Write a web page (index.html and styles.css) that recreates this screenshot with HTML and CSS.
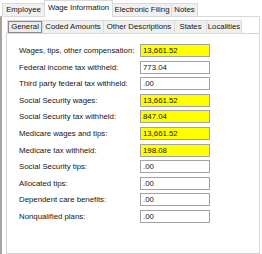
FILE: index.html
```html
<!DOCTYPE html>
<html>
<head>
<meta charset="utf-8">
<link rel="stylesheet" href="styles.css">
</head>
<body>
<div class="tabs">
  <div class="tab t-emp">Employee</div>
  <div class="tab active t-wage">Wage Information</div>
  <div class="tab t-efile">Electronic Filing</div>
  <div class="tab t-notes">Notes</div>
</div>
<div class="window">
  <div class="subtabs">
    <div class="subtab s-general active"><span class="focus">General</span></div>
    <div class="subtab s-coded">Coded Amounts</div>
    <div class="subtab s-other">Other Descriptions</div>
    <div class="subtab s-states">States</div>
    <div class="subtab s-local">Localities</div>
  </div>
  <div class="subpanel">
    <div class="row"><span class="label">Wages, tips, other compensation:</span><span class="box hl">13,661.52</span></div>
    <div class="row"><span class="label">Federal income tax withheld:</span><span class="box">773.04</span></div>
    <div class="row"><span class="label">Third party federal tax withheld:</span><span class="box">.00</span></div>
    <div class="row"><span class="label">Social Security wages:</span><span class="box hl">13,661.52</span></div>
    <div class="row"><span class="label">Social Security tax withheld:</span><span class="box hl">847.04</span></div>
    <div class="row"><span class="label">Medicare wages and tips:</span><span class="box hl">13,661.52</span></div>
    <div class="row"><span class="label">Medicare tax withheld:</span><span class="box hl">198.08</span></div>
    <div class="row"><span class="label">Social Security tips:</span><span class="box">.00</span></div>
    <div class="row"><span class="label">Allocated tips:</span><span class="box">.00</span></div>
    <div class="row"><span class="label">Dependent care benefits:</span><span class="box">.00</span></div>
    <div class="row"><span class="label">Nonqualified plans:</span><span class="box">.00</span></div>
  </div>
</div>
</body>
</html>
```
FILE: styles.css
```css
html, body {
  margin: 0;
  padding: 0;
  background: #ffffff;
  overflow: hidden;
}
body {
  width: 262px;
  height: 254px;
  font-family: "Liberation Sans", Arial, sans-serif;
  font-size: 7.8px;
  color: #141414;
}
.tabs {
  display: flex;
  align-items: flex-end;
  height: 17px;
  padding-left: 2px;
}
.tab {
  box-sizing: border-box;
  height: 14px;
  line-height: 12px;
  text-align: center;
  white-space: nowrap;
  background: #f0f0f0;
  border: 1px solid #d9d9d9;
  margin-right: -1px;
}
.tab.active {
  position: relative;
  z-index: 1;
  height: 17px;
  line-height: 14px;
  background: #ffffff;
  border-bottom: none;
}
.t-emp { width: 43px; }
.t-wage { width: 69px; }
.t-efile { width: 60px; }
.t-notes { width: 27px; }
.window {
  margin-top: -1px;
  margin-right: 2px;
  height: 234px;
  border-left: 2px solid #a9a39b;
  border-top: 1px solid #d9d9d9;
  border-right: 1px solid #d9d9d9;
  padding: 3px 0 0 4px;
}
.subtabs {
  display: flex;
  height: 14px;
  padding-left: 1px;
}
.subtab {
  box-sizing: border-box;
  height: 14px;
  line-height: 12px;
  text-align: center;
  white-space: nowrap;
  background: #f0f0f0;
  border: 1px solid #d9d9d9;
  margin-right: -1px;
}
.subtab.active {
  padding: 0;
  background: #ececec;
}
.focus {
  display: block;
  box-sizing: border-box;
  height: 12px;
  line-height: 10px;
  border: 1px solid #8a8a8a;
}
.s-general { width: 36px; }
.s-coded { width: 62px; }
.s-other { width: 72px; }
.s-states { width: 33px; }
.s-local { width: 36px; }
.subpanel {
  box-sizing: border-box;
  margin-top: -1px;
  height: 221px;
  border-left: 1px solid #d4d4d4;
  border-top: 1px solid #d4d4d4;
  border-bottom: 1px solid #d4d4d4;
  padding: 10px 0 0 12px;
}
.row {
  display: flex;
  height: 16.6px;
}
.label {
  width: 121px;
  line-height: 13px;
  white-space: nowrap;
}
.box {
  box-sizing: border-box;
  width: 70px;
  height: 13px;
  line-height: 11px;
  padding-left: 2px;
  border: 1px solid #a2a2a2;
  background: #ffffff;
}
.box.hl {
  background: #ffff00;
}
```
